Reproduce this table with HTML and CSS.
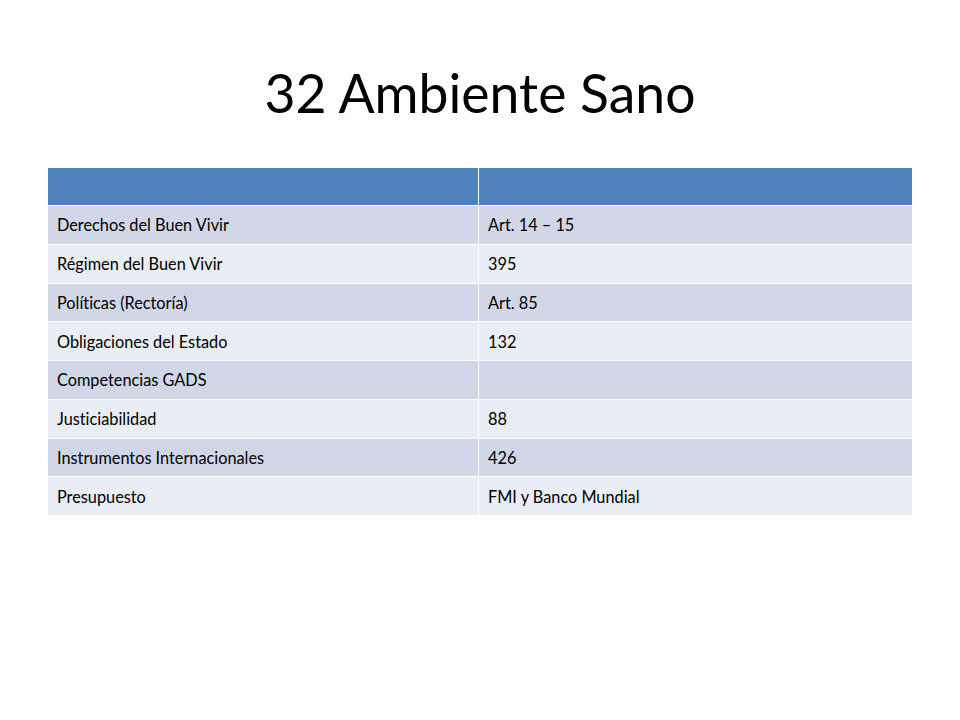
FILE: index.html
```html
<!DOCTYPE html>
<html lang="es">
<head>
<meta charset="utf-8">
<title>32 Ambiente Sano</title>
<link rel="stylesheet" href="styles.css">
</head>
<body>
<main class="slide">
  <h1 class="title">32 Ambiente Sano</h1>
  <div class="table">
    <div class="cell head"></div><div class="cell head"></div>
    <div class="cell odd">Derechos del Buen Vivir</div><div class="cell odd">Art. 14 – 15</div>
    <div class="cell even">Régimen del Buen Vivir</div><div class="cell even">395</div>
    <div class="cell odd">Políticas (Rectoría)</div><div class="cell odd">Art. 85</div>
    <div class="cell even">Obligaciones del Estado</div><div class="cell even">132</div>
    <div class="cell odd">Competencias GADS</div><div class="cell odd"></div>
    <div class="cell even">Justiciabilidad</div><div class="cell even">88</div>
    <div class="cell odd">Instrumentos Internacionales</div><div class="cell odd">426</div>
    <div class="cell even">Presupuesto</div><div class="cell even">FMI y Banco Mundial</div>
  </div>
</main>
</body>
</html>
```

FILE: styles.css
```css
html, body {
  margin: 0;
  padding: 0;
  background: #ffffff;
}
.slide {
  width: 960px;
  height: 720px;
  display: flex;
  flex-direction: column;
  align-items: center;
  font-family: Lato, "Open Sans", sans-serif;
  font-variant-ligatures: none;
  color: #000000;
}
.title {
  margin: 57px 0 0 0;
  height: 111px;
  font-weight: 400;
  font-size: 53.5px;
  line-height: 70px;
  text-align: center;
}
.table {
  display: grid;
  grid-template-columns: 430px 433px;
  grid-template-rows: 37px repeat(8, 37.75px);
  column-gap: 1px;
  row-gap: 1px;
  width: 864px;
}
.cell {
  display: flex;
  align-items: center;
  padding-left: 9px;
  font-size: 16.3px;
  color: #000000;
}
.head {
  background: #4f81bd;
  margin-bottom: 2px;
  height: 37px;
}
.odd { background: #d0d8e8; }
.even { background: #e9edf4; }
```
